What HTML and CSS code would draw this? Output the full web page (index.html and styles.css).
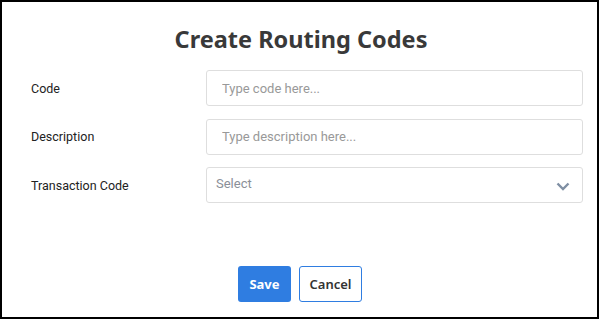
FILE: index.html
```html
<!DOCTYPE html>
<html lang="en">
<head>
    <meta charset="UTF-8" />
    <title>Create Routing Codes</title>
    <link rel="stylesheet" href="styles.css">
</head>
<body>
<div class="card">
    <h2>Create Routing Codes</h2>
    <form class="form-grid">
        <label for="code">Code</label>
        <input id="code" type="text" placeholder="Type code here...">

        <label for="desc">Description</label>
        <input id="desc" type="text" placeholder="Type description here...">

        <label for="trx">Transaction Code</label>
        <div class="select-box" id="trx">
            <span>Select</span>
            <svg width="14" height="9" viewBox="0 0 14 9">
                <path d="M1.5 1.5 L7 7 L12.5 1.5" fill="none" stroke="#7f8fa3" stroke-width="2.4"/>
            </svg>
        </div>
    </form>
    <div class="actions">
        <button class="btn save-btn">Save</button>
        <button class="btn cancel-btn">Cancel</button>
    </div>
</div>
</body>
</html>
```

FILE: styles.css
```css
body {
    margin: 0;
    background: #fff;
    font-family: 'Roboto', sans-serif;
}
.card {
    box-sizing: border-box;
    width: 599px;
    height: 319px;
    border: 2px solid #000;
    padding: 21px 14px 0 29px;
}
h2 {
    margin: 0 -14px 14px -29px;
    padding-left: 3px;
    text-align: center;
    font-family: 'Noto Sans', sans-serif;
    font-size: 23.5px;
    line-height: 33px;
    font-weight: 700;
    color: #393939;
}
.form-grid {
    display: grid;
    grid-template-columns: 175px 1fr;
    row-gap: 12.5px;
    align-items: center;
}
.form-grid label {
    font-size: 12.5px;
    color: #222;
}
.form-grid input,
.select-box {
    box-sizing: border-box;
    height: 36px;
    width: 100%;
    border: 1px solid #dedede;
    border-radius: 3px;
    font-family: 'Roboto', sans-serif;
    font-size: 13px;
    padding: 0 15px;
    outline: none;
}
.form-grid input::placeholder {
    color: #999;
}
.select-box {
    display: flex;
    align-items: center;
    justify-content: space-between;
    padding: 0 12px 4px 9px;
    color: #8a8f98;
}
.select-box svg {
    margin-top: 7px;
}
.actions {
    display: flex;
    justify-content: center;
    gap: 8px;
    margin-top: 63px;
    padding-right: 14px;
}
.btn {
    height: 36px;
    border-radius: 3px;
    font-family: 'Noto Sans', sans-serif;
    font-size: 13px;
    cursor: pointer;
    padding: 0;
}
.save-btn {
    width: 53px;
    background: #2f7de1;
    border: none;
    color: #fff;
    font-weight: 700;
}
.cancel-btn {
    width: 63px;
    background: #fff;
    border: 1px solid #2f7de1;
    color: #333;
    font-weight: 600;
}
```
